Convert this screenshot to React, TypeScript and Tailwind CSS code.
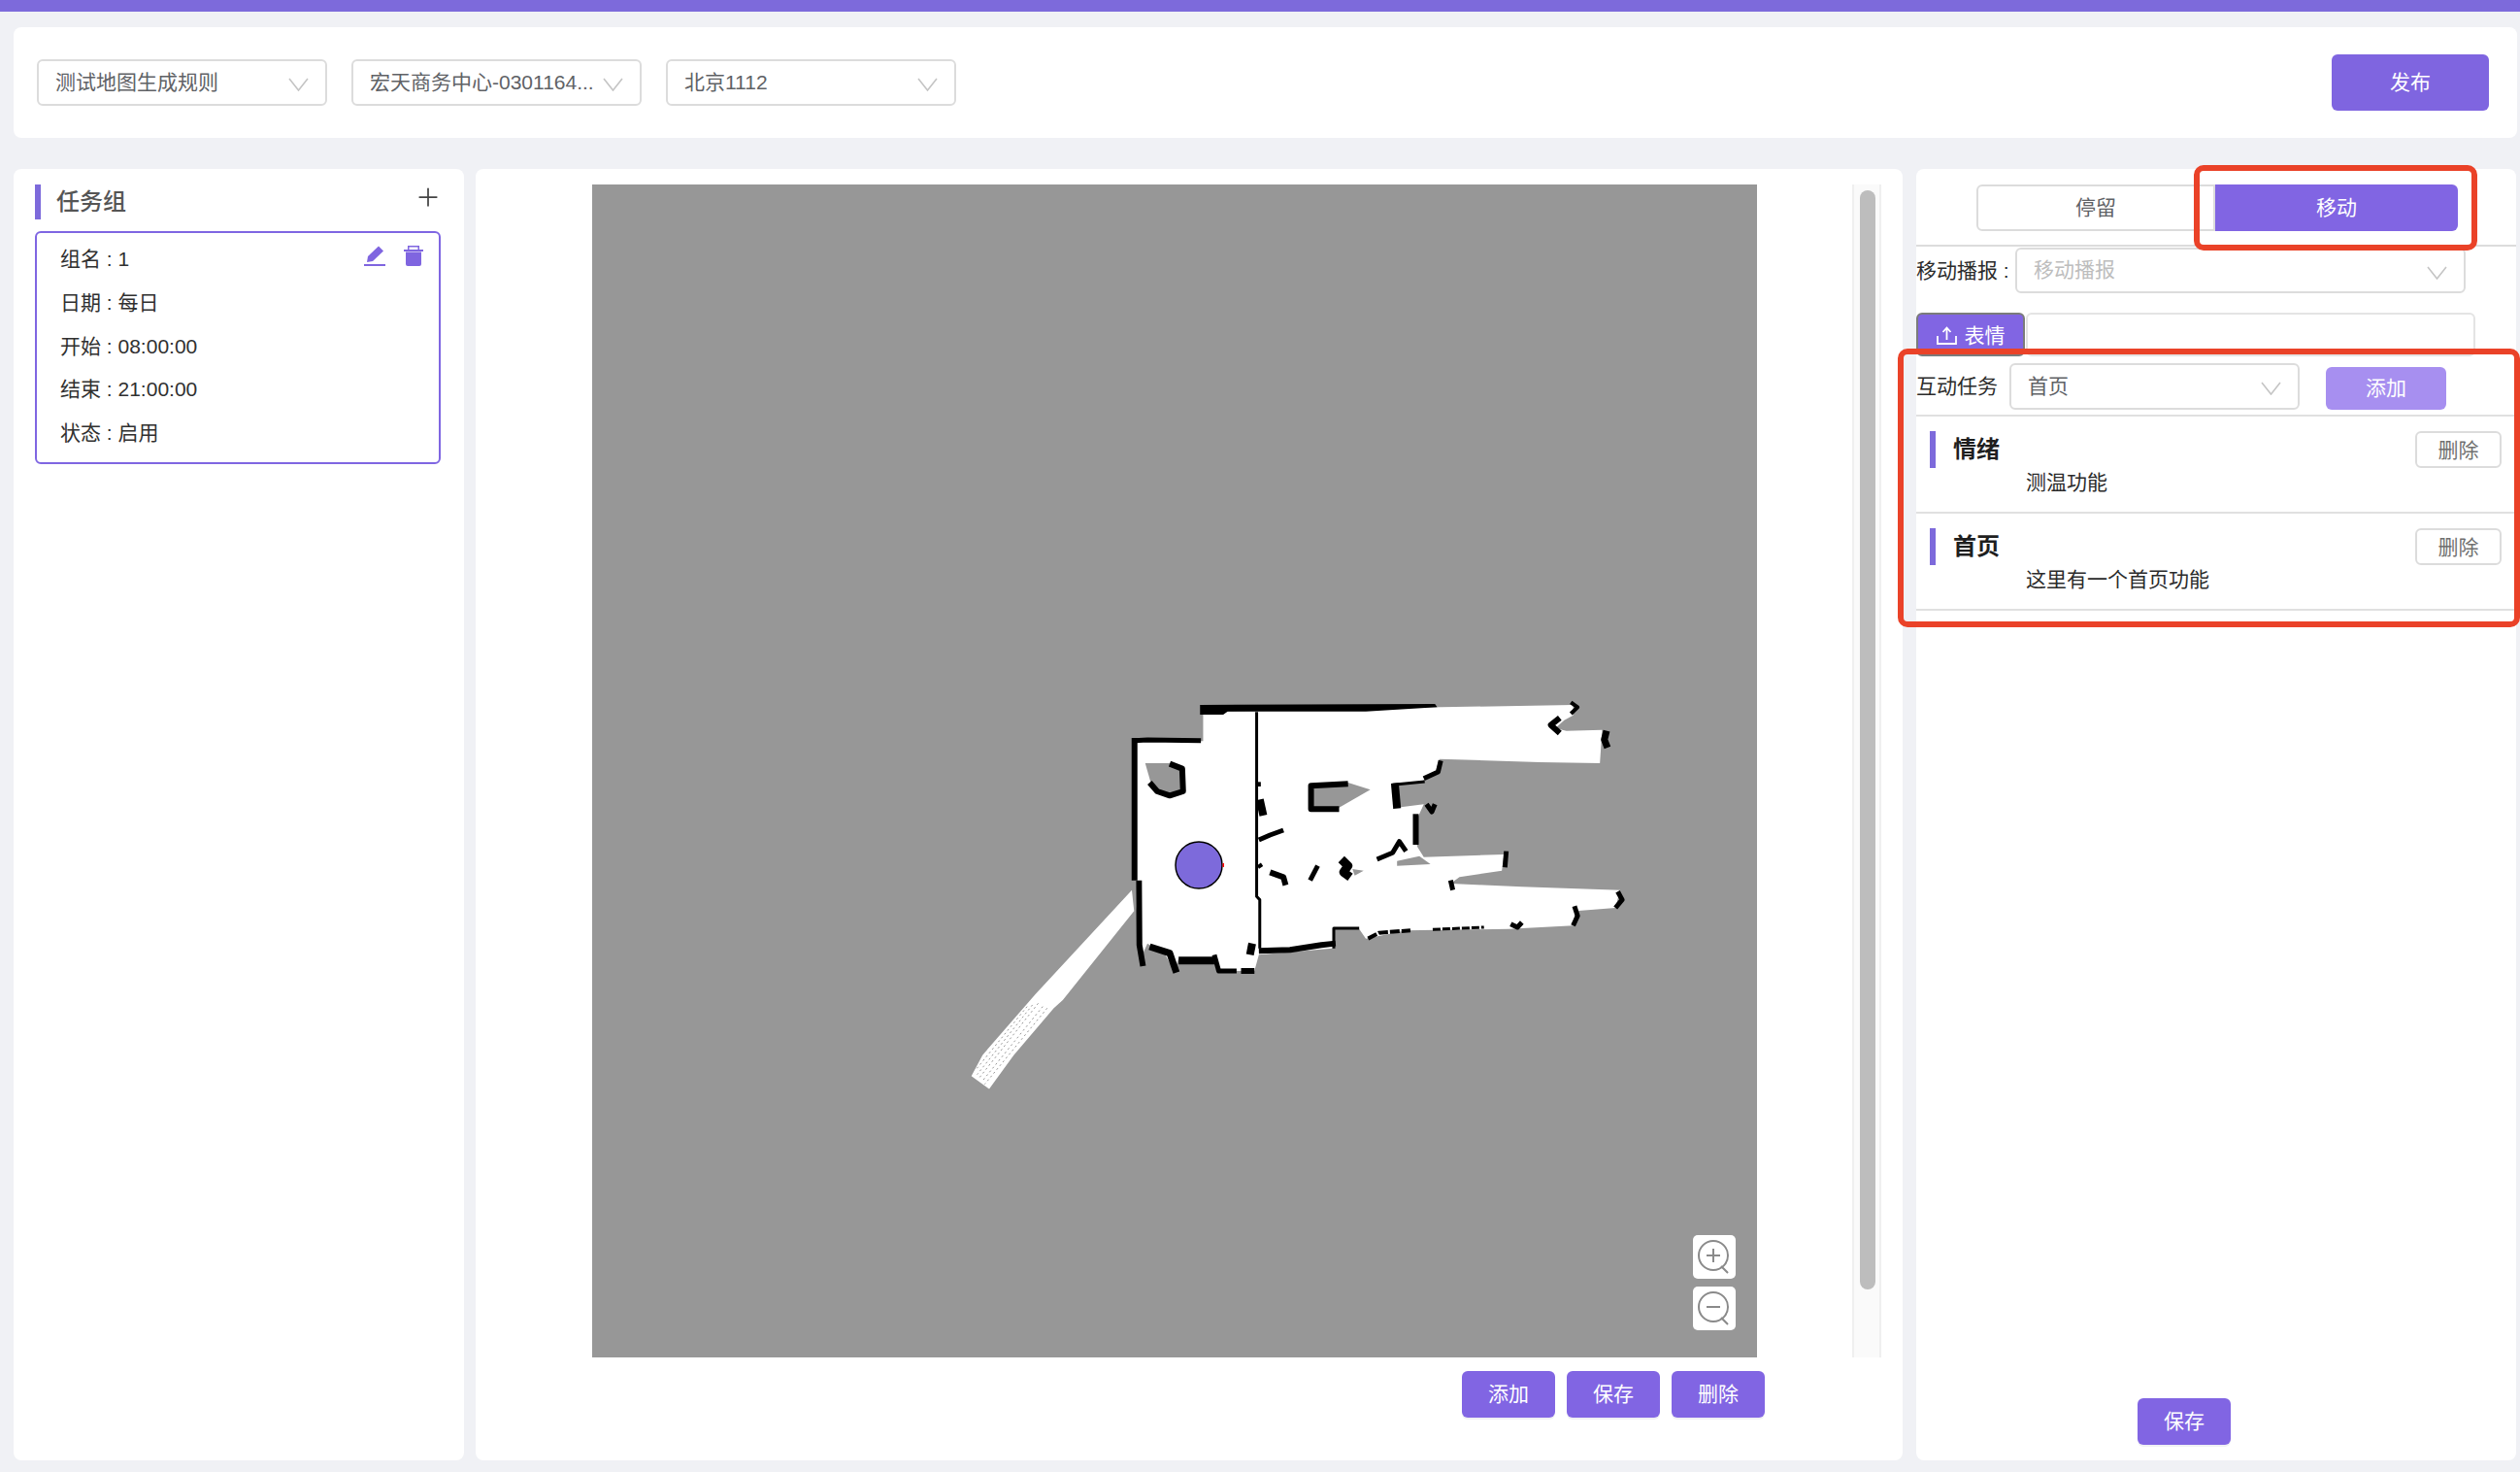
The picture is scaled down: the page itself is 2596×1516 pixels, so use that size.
import React from "react";
import { Plus } from "lucide-react";

const FONT = "font-['Liberation_Sans','Noto_Sans_CJK_SC',sans-serif]";

function Chevron({ className = "" }: { className?: string }) {
  return (
    <svg width="21" height="14" viewBox="0 0 21 14" className={className} fill="none">
      <path d="M1 1 L10.5 13 L20 1" stroke="#c4c4c4" strokeWidth="1.6" />
    </svg>
  );
}

function Select({ text, w = "w-[299px]", h = "h-[48px]", placeholder = false }: { text: string; w?: string; h?: string; placeholder?: boolean }) {
  return (
    <div className={`${w} ${h} shrink-0 bg-white border-2 border-[#dcdcdc] rounded-md flex items-center justify-between pl-[17px] pr-[17px] text-[21px] leading-none ${placeholder ? "text-[#bdbdbd]" : "text-[#606266]"}`}>
      <span className="whitespace-nowrap mt-[-2px]">{text}</span>
      <Chevron className="mt-[4px]" />
    </div>
  );
}

function PurpleBtn({ text, className = "" }: { text: string; className?: string }) {
  return (
    <button className={`w-[96px] h-[48px] rounded-md bg-[#8165e3] text-white text-[21px] shadow-[0_2px_0_#f0f0f4] ${className}`}>
      {text}
    </button>
  );
}

function ZoomBtn({ plus }: { plus?: boolean }) {
  return (
    <div className="w-[44px] h-[45px] bg-white rounded-[5px] flex items-center justify-center">
      <svg width="36" height="36" viewBox="0 0 36 36" fill="none" stroke="#8a8a8a" strokeWidth="2">
        <circle cx="17" cy="16" r="15" />
        <path d="M25 27 L32 34" />
        <path d="M10 16 H24" />
        {plus && <path d="M17 9 V23" />}
      </svg>
    </div>
  );
}

function TaskItem({ title, desc }: { title: string; desc: string }) {
  return (
    <div className="h-[100px] border-b-2 border-[#e0e0e0]">
      <div className="flex items-start pt-[15px] pl-[14px] pr-[15px]">
        <div className="w-[6px] h-[38px] bg-[#7d6adb]" />
        <div className="ml-[18px] pt-[1px] text-[24px] leading-[36px] font-bold text-[#1f1f1f]">{title}</div>
        <button className="ml-auto w-[89px] h-[38px] bg-white border-2 border-[#dcdcdc] rounded-md text-[21px] leading-none text-[#707070]">删除</button>
      </div>
      <div className="pl-[113px] mt-0 text-[21px] leading-[30px] text-[#2b2b2b]">{desc}</div>
    </div>
  );
}

function Wall({ w, p, dash }: { w: number; p: string; dash?: string }) {
  return (
    <polyline
      points={p}
      fill="none"
      stroke="#000"
      strokeWidth={w}
      strokeDasharray={dash}
      strokeLinejoin="round"
      vectorEffect="non-scaling-stroke"
    />
  );
}

function Stripe({ p }: { p: string }) {
  return <polyline points={p} fill="none" stroke="#979797" strokeWidth={1} strokeDasharray="2 3" vectorEffect="non-scaling-stroke" />;
}

function MapDrawing() {
  return (
    <svg width="1200" height="1208" viewBox="0 0 1200 1208" className="absolute inset-0">
      <g transform="translate(370 510) scale(0.4592 0.3333)" className="blur-[0.5px]">
        <polygon fill="#fff" points="565,100 1100,85 1395,78 1395,110 1375,125 1355,150 1380,158 1460,155 1455,258 1320,255 1095,245 1085,290 1050,318 990,325 1000,395 1060,385 1045,430 1045,515 1060,548 1240,540 1235,590 1140,610 1120,630 1280,640 1500,650 1490,705 1400,715 1395,760 1250,770 1020,775 930,800 915,770 860,770 855,830 690,850 680,900 595,900 590,860 510,860 500,900 480,850 440,815 425,860 415,700 415,190 565,190" />
        <polygon fill="#fff" points="405,650 410,715 250,990 230,1015 140,1160 85,1265 45,1225 70,1160 190,970" />
        <Stripe p="195,1000 60,1235" />
        <Stripe p="215,1015 75,1250" />
        <Stripe p="170,1010 55,1205" />
        <Stripe p="205,1010 68,1243" />
        <Stripe p="182,1005 58,1220" />
        <polygon fill="#979797" points="435,258 490,258 520,280 525,345 490,365 450,330" />
        <polygon fill="#979797" points="805,325 890,318 940,340 870,395 810,405" />
        <polygon fill="#979797" points="1000,560 1050,545 1075,570 1000,575" />
        <polygon fill="#979797" points="900,585 925,590 905,605" />
        <polygon fill="#000" points="558,78 1085,75 1090,85 930,98 620,98 610,108 558,108" />
        <Wall w={6} p="411,180 411,620" />
        <Wall w={6} p="421,620 422,820 430,885" />
        <Wall w={5} p="411,188 440,186 560,188" />
        <Wall w={3} p="685,100 685,670 692,680 692,830" />
        <Wall w={6} p="490,260 518,275 520,345 490,358 462,345 445,318" />
        <Wall w={6} p="890,322 807,328 807,400 870,400" />
        <Wall w={3} p="1062,315 990,325" />
        <Wall w={8} p="995,320 1000,398" />
        <Wall w={5} p="1098,250 1092,285 1060,305" />
        <Wall w={6} p="1042,415 1042,510" />
        <Wall w={5} p="1066,385 1078,408 1085,385" />
        <Wall w={5} p="955,555 990,535 1005,500 1020,530" />
        <Wall w={7} p="445,825 490,845 505,905" />
        <Wall w={8} p="510,868 590,868" />
        <Wall w={5} p="590,850 600,900 640,900" />
        <Wall w={6} p="650,900 680,900" />
        <Wall w={8} p="675,815 670,850" />
        <Wall w={6} p="690,838 760,835 830,820 862,815" />
        <Wall w={3} p="858,830 858,768 915,768" />
        <Wall w={4} p="935,800 960,782 1030,775" dash="10 2" />
        <Wall w={3} p="1080,772 1195,765" dash="8 2" />
        <Wall w={5} p="1255,755 1270,765 1280,750" />
        <Wall w={5} p="1398,700 1405,730 1395,760" />
        <Wall w={5} p="1495,655 1505,680 1490,705" />
        <Wall w={5} p="1245,530 1242,580" />
        <Wall w={5} p="1120,620 1125,650" />
        <Wall w={4} p="1390,70 1405,85 1390,105" />
        <Wall w={6} p="1365,118 1345,140 1365,165" />
        <Wall w={7} p="1470,158 1465,185 1472,210" />
        <Wall w={4} p="690,316 690,330" />
        <Wall w={8} p="692,370 700,420" />
        <Wall w={5} p="690,495 715,480 745,465" />
        <Wall w={5} p="690,570 695,580" />
        <Wall w={6} p="715,595 745,610 750,635" />
        <Wall w={5} p="822,575 805,620" />
        <Wall w={9} p="875,555 890,575 880,595 895,610" />
      </g>
      <circle cx="625" cy="701" r="24" fill="#7d6adb" stroke="#000" strokeWidth="1.5" />
      <rect x="649.5" y="699" width="1.5" height="4" fill="#f00" />
    </svg>
  );
}

export default function App() {
  return (
    <div className={`${FONT} w-[2596px] h-[1516px] overflow-hidden bg-[#f0f1f5] flex flex-col`}>
      <div className="h-3 shrink-0 bg-[#7d6adb]" />

      {/* header */}
      <div className="mt-4 ml-[14px] mr-[3px] h-[114px] shrink-0 bg-white rounded-lg flex items-center pl-6 pr-[29px] gap-[25px]">
        <Select text="测试地图生成规则" />
        <Select text="宏天商务中心-0301164..." />
        <Select text="北京1112" />
        <button className="ml-auto w-[162px] h-[58px] rounded-md bg-[#7f65e0] text-white text-[21px]">发布</button>
      </div>

      {/* main */}
      <div className="mt-8 ml-[14px] flex h-[1330px]">
        {/* left */}
        <div className="w-[464px] bg-white rounded-lg pt-4 px-[22px]">
          <div className="h-[36px] border-l-[6px] border-[#7d6adb] flex items-center justify-between pl-[16px]">
            <span className="text-[24px] leading-none font-medium text-[#555]">任务组</span>
            <Plus size={30} strokeWidth={1.4} color="#444" className="mt-[-11px]" />
          </div>
          <div className="relative mt-3 w-[418px] h-[240px] border-2 border-[#7f66e2] rounded-md pl-[24px] pt-[5px] text-[21px] text-[#303030]">
            <div className="h-[44px] leading-[44px]">组名 : 1</div>
            <div className="h-[45px] leading-[45px]">日期 : 每日</div>
            <div className="h-[45px] leading-[45px]">开始 : 08:00:00</div>
            <div className="h-[44px] leading-[44px]">结束 : 21:00:00</div>
            <div className="h-[45px] leading-[45px]">状态 : 启用</div>
            <div className="absolute top-[13px] right-[16px] flex gap-[19px]">
              <svg width="22" height="21" viewBox="0 0 22 21" fill="#7f65e0">
                <path d="M15 0.5 L20 5.5 L9 16 L3 17 L4 11 Z" />
                <rect x="0" y="19" width="22" height="2" />
              </svg>
              <svg width="20" height="21" viewBox="0 0 20 21" fill="#7f65e0">
                <path d="M4 0 H16 V4 H20 V6 H0 V4 H4 Z M5.5 1.5 V4 H14.5 V1.5 Z" fillRule="evenodd" />
                <path d="M2 6.5 H18 V19 Q18 21 16 21 H4 Q2 21 2 19 Z" />
              </svg>
            </div>
          </div>
        </div>

        {/* middle */}
        <div className="ml-3 w-[1470px] bg-white rounded-lg pt-4 pl-[120px]">
          <div className="flex h-[1208px]">
            <div className="relative w-[1200px] h-[1208px] bg-[#979797]">
              <MapDrawing />
              <div className="absolute left-[1134px] top-[1082px] flex flex-col gap-[8px]">
                <ZoomBtn plus />
                <ZoomBtn />
              </div>
            </div>
            <div className="ml-[98px] w-[30px] h-full bg-[#fafafa] border-x-2 border-[#efefef] pl-[6px] pt-[6px]">
              <div className="w-[16px] h-[1132px] rounded-full bg-[#bdbdbd]" />
            </div>
          </div>
          <div className="mt-[14px] ml-[896px] flex gap-3">
            <PurpleBtn text="添加" />
            <PurpleBtn text="保存" />
            <PurpleBtn text="删除" />
          </div>
        </div>

        {/* right */}
        <div className="relative ml-[14px] w-[618px] bg-white rounded-lg flex flex-col">
          <div className="h-[80px] shrink-0 border-b-2 border-[#dcdcdc] pt-4 pl-[62px] flex items-start">
            <div className="w-[246px] h-[48px] border-2 border-[#dcdcdc] rounded-l-md bg-white flex items-center justify-center text-[21px] text-[#606266]">停留</div>
            <div className="w-[250px] h-[48px] rounded-r-md bg-[#8165e3] flex items-center justify-center text-[21px] text-white">移动</div>
          </div>

          <div className="mt-[1px] flex items-center text-[21px] text-[#2b2b2b]">
            <span className="w-[102px] shrink-0 whitespace-nowrap">移动播报 :</span>
            <Select text="移动播报" w="w-[464px]" h="h-[47px]" placeholder />
          </div>

          <div className="mt-[20px] flex items-stretch h-[45px]">
            <button className="w-[112px] pt-[2px] border-2 border-[#7b7b7b] rounded-md bg-[#8165e3] text-white text-[21px] flex items-center justify-center gap-[8px]">
              <svg width="21" height="19" viewBox="0 0 21 19" fill="none" stroke="#fff" strokeWidth="1.8">
                <path d="M1 10 V18 H20 V10" />
                <path d="M10.5 14 V2 M6.5 6 L10.5 1.5 L14.5 6" />
              </svg>
              表情
            </button>
            <div className="ml-px w-[463px] border-2 border-[#e4e4e4] rounded-md bg-white" />
          </div>

          <div className="mt-[7px] h-[55px] shrink-0 border-b-2 border-[#e0e0e0] flex items-start text-[21px] text-[#2b2b2b]">
            <span className="w-[96px] shrink-0 leading-[48px]">互动任务</span>
            <Select text="首页" />
            <button className="ml-[27px] mt-1 w-[124px] h-[44px] rounded-md bg-[#a78ff0] text-white text-[21px]">添加</button>
          </div>

          <TaskItem title="情绪" desc="测温功能" />
          <TaskItem title="首页" desc="这里有一个首页功能" />

          <PurpleBtn text="保存" className="mt-auto mb-4 ml-[228px] self-start" />

          {/* annotation rectangles */}
          <div className="absolute left-[286px] top-[-4px] w-[292px] h-[88px] border-[6px] border-[#ea4228] rounded-[10px]" />
          <div className="absolute left-[-19px] top-[185px] w-[641px] h-[287px] border-[6px] border-[#ea4228] rounded-[10px]" />
        </div>
      </div>
    </div>
  );
}
